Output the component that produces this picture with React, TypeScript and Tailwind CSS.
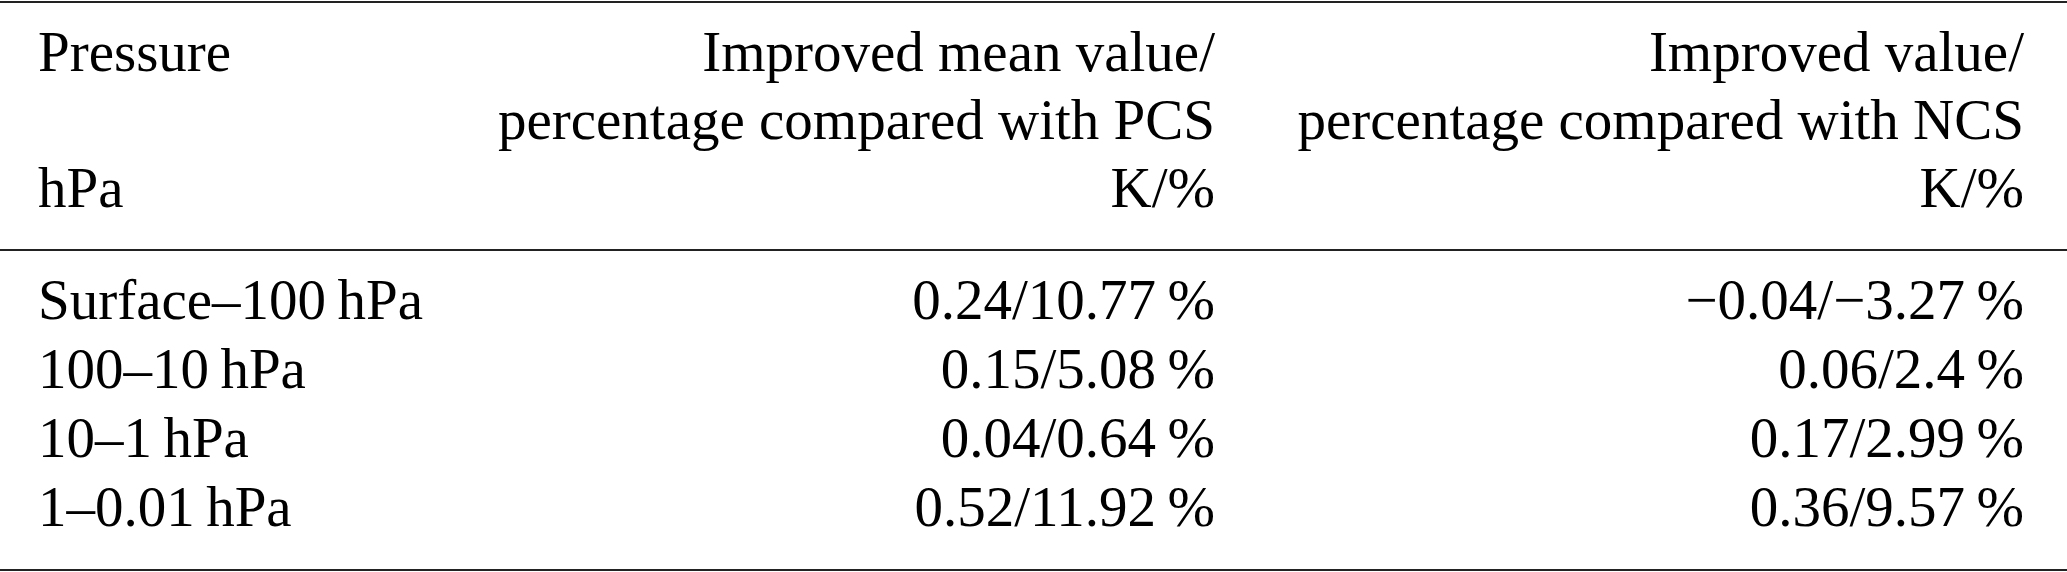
const header = [
  ["Pressure", "", "hPa"],
  ["Improved mean value/", "percentage compared with PCS", "K/%"],
  ["Improved value/", "percentage compared with NCS", "K/%"],
];

const rows: [string, string, string][] = [
  ["Surface–100\u2009hPa", "0.24/10.77\u2009%", "−0.04/−3.27\u2009%"],
  ["100–10\u2009hPa", "0.15/5.08\u2009%", "0.06/2.4\u2009%"],
  ["10–1\u2009hPa", "0.04/0.64\u2009%", "0.17/2.99\u2009%"],
  ["1–0.01\u2009hPa", "0.52/11.92\u2009%", "0.36/9.57\u2009%"],
];

const cols = "grid grid-cols-[377px_800px_809px] pl-[38px]";

export default function App() {
  return (
    <div className="w-[2067px] h-[572px] bg-white pt-px text-black font-['Liberation_Serif','Times_New_Roman',serif] text-[57px]">
      <div className="border-t-2 border-b-2 border-[#222]">
        <div className={`${cols} pt-[15px] pb-[27px] leading-[68px] border-b-2 border-[#222]`}>
          {header.map((lines, i) => (
            <div key={i} className={i === 0 ? "text-left" : "text-right"}>
              {lines.map((l, j) => (
                <div key={j} className="whitespace-nowrap h-[68px]">{l}</div>
              ))}
            </div>
          ))}
        </div>
        <div className="pt-[14px] pb-[28px] leading-[69px]">
          {rows.map((r, i) => (
            <div key={i} className={cols}>
              <div className="whitespace-nowrap">{r[0]}</div>
              <div className="whitespace-nowrap text-right">{r[1]}</div>
              <div className="whitespace-nowrap text-right">{r[2]}</div>
            </div>
          ))}
        </div>
      </div>
    </div>
  );
}
